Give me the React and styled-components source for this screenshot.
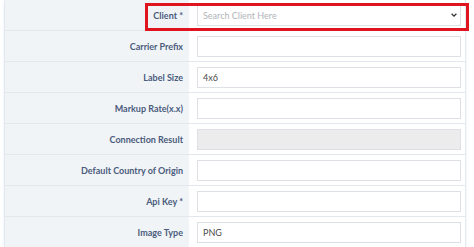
import React from 'react';
import styled, { createGlobalStyle } from 'styled-components';

const GlobalStyle = createGlobalStyle`
  html, body {
    margin: 0;
    padding: 0;
    background: #ffffff;
    font-family: Lato, "Open Sans", "Liberation Sans", sans-serif;
  }
`;

const Page = styled.div`
  position: relative;
  width: 474px;
  height: 247px;
  padding: 0 8px 0 4px;
  box-sizing: border-box;
`;

const Table = styled.div`
  display: grid;
  grid-template-columns: 184px 1fr;
  border-left: 1px solid #e4eaf0;
  border-right: 1px solid #e4eaf0;
  box-shadow: 0 2px 2px rgba(200, 215, 230, 0.5);
`;

const LabelCell = styled.div`
  height: 30px;
  display: flex;
  align-items: center;
  justify-content: flex-end;
  padding-right: 6px;
  background: #f1f4f7;
  border-bottom: 1px solid #e2e8ee;
  font-size: 9px;
  font-weight: 700;
  color: #4a5b7c;
  white-space: nowrap;
`;

const ValueCell = styled.div`
  height: 30px;
  display: flex;
  align-items: center;
  padding: 0 4px 0 8px;
  border-bottom: 1px solid #e2e8ee;
  background: #ffffff;
`;

const Field = styled.div`
  flex: 1;
  height: 21px;
  display: flex;
  align-items: center;
  justify-content: space-between;
  padding: 0 6px 0 5px;
  box-sizing: border-box;
  border: 1px solid #dde1e5;
  background: ${p => (p.$disabled ? '#ececec' : '#ffffff')};
  font-size: 9px;
  color: ${p => (p.$placeholder ? '#b0b4b9' : '#4a4a4a')};
`;

const Chevron = styled.svg`
  width: 8px;
  height: 8px;
  margin-right: -4px;
`;

const Highlight = styled.div`
  position: absolute;
  left: 145px;
  top: 3px;
  width: 324px;
  height: 28px;
  box-sizing: border-box;
  border: 3px solid #e0141e;
  pointer-events: none;
`;

const rows = [
  { label: 'Client *', value: 'Search Client Here', placeholder: true, select: true },
  { label: 'Carrier Prefix', value: '' },
  { label: 'Label Size', value: '4x6' },
  { label: 'Markup Rate(x.x)', value: '' },
  { label: 'Connection Result', value: '', disabled: true },
  { label: 'Default Country of Origin', value: '' },
  { label: 'Api Key *', value: '' },
  { label: 'Image Type', value: 'PNG' },
];

export default function App() {
  return (
    <>
      <GlobalStyle />
      <Page>
        <Table>
          {rows.map(r => (
            <React.Fragment key={r.label}>
              <LabelCell>{r.label}</LabelCell>
              <ValueCell>
                <Field $placeholder={r.placeholder} $disabled={r.disabled}>
                  <span>{r.value}</span>
                  {r.select && (
                    <Chevron viewBox="0 0 10 10">
                      <path d="M2 3.5 L5 6.5 L8 3.5" fill="none" stroke="#333" strokeWidth="1.6" />
                    </Chevron>
                  )}
                </Field>
              </ValueCell>
            </React.Fragment>
          ))}
        </Table>
        <Highlight />
      </Page>
    </>
  );
}
